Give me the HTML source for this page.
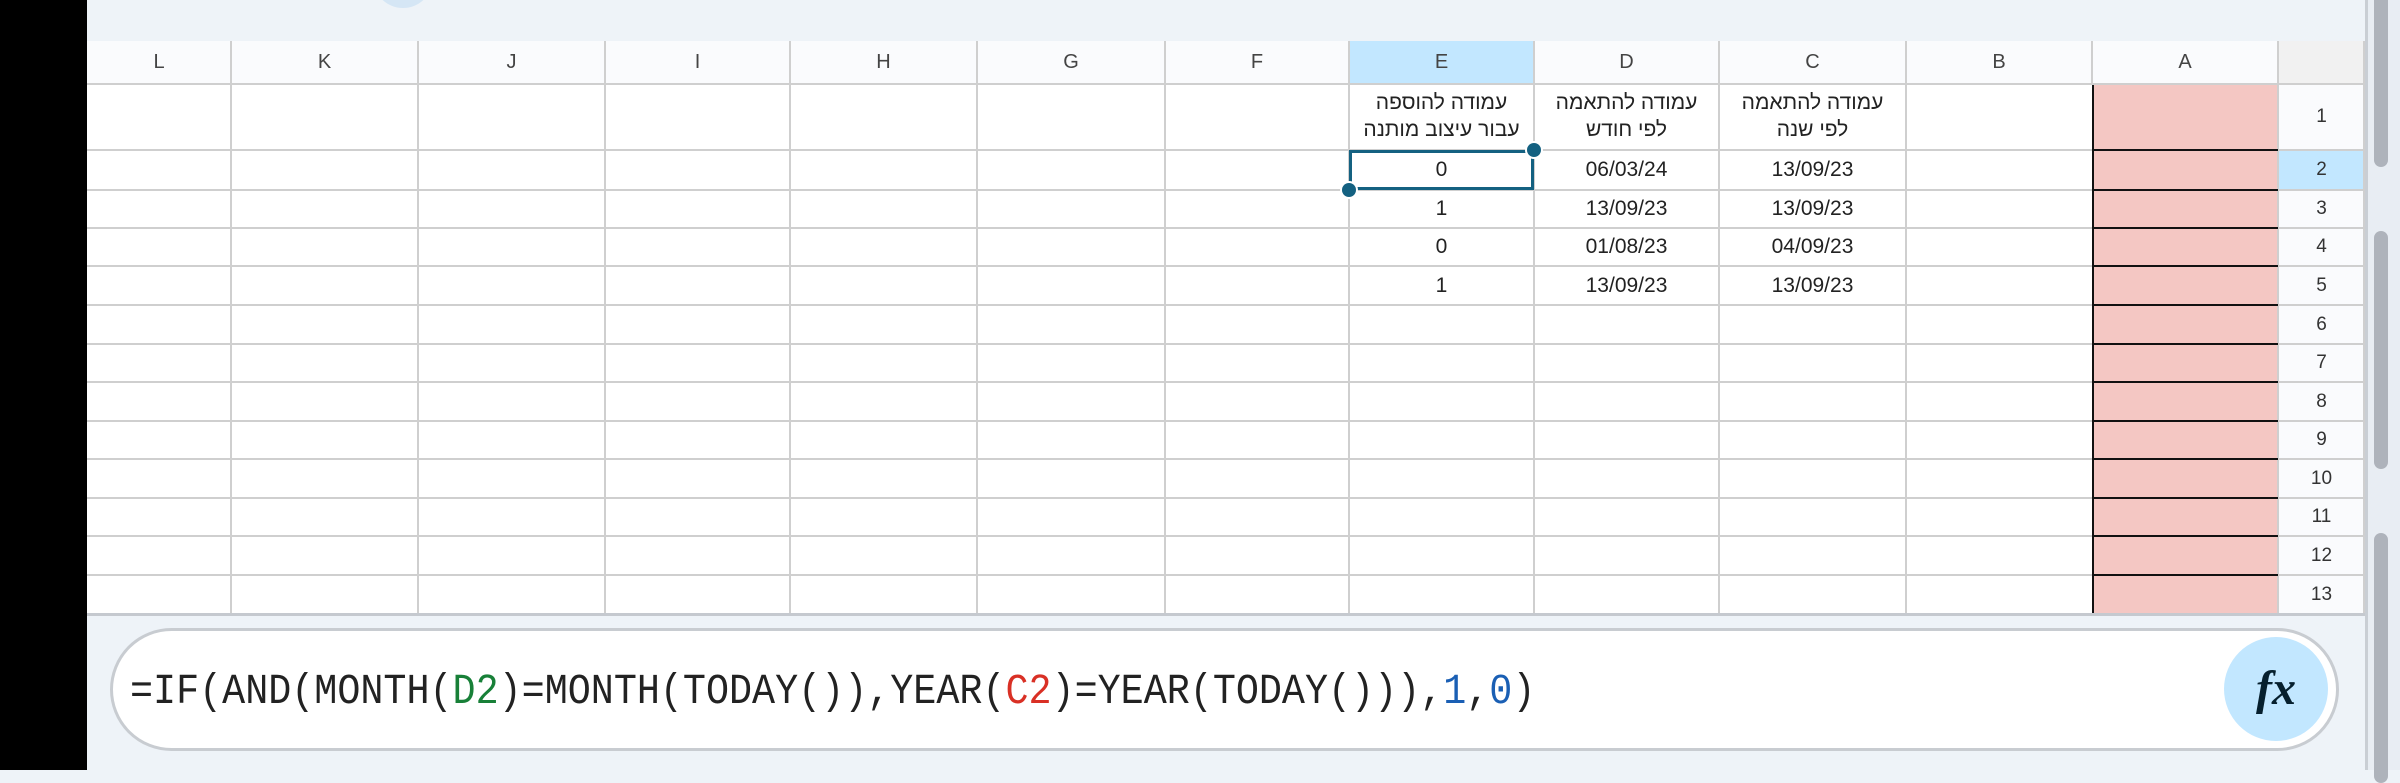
<!DOCTYPE html>
<html><head><meta charset="utf-8"><style>
*{margin:0;padding:0;box-sizing:border-box}
body{width:2400px;height:770px;overflow:hidden;background:#eef3f8;position:relative;font-family:"Liberation Sans",sans-serif}
.a{position:absolute}
.v{position:absolute;width:2px;background:#cfcfcf}
.h{position:absolute;height:2px;background:#cfcfcf}
.ch{position:absolute;top:41px;height:43px;line-height:43px;text-align:center;font-size:20px;color:#444}
.t{position:absolute;text-align:center;font-size:21px;color:#222}
.rn{position:absolute;left:2278px;width:87px;text-align:center;font-size:19px;color:#333}
</style></head><body>
<div class="a" style="left:0;top:0;width:87px;height:770px;background:#000"></div>
<div class="a" style="left:373px;top:-52px;width:60px;height:60px;border-radius:50%;background:#d5e6f5"></div>
<div class="a" style="left:87px;top:41px;width:2191px;height:43px;background:#fafbfd"></div>
<div class="a" style="left:1349px;top:41px;width:185px;height:43px;background:#c2e7ff"></div>
<div class="a" style="left:2278px;top:41px;width:87px;height:43px;background:#f1f1f1"></div>
<div class="a" style="left:87px;top:84px;width:2191px;height:530px;background:#fff"></div>
<div class="a" style="left:2278px;top:84px;width:87px;height:530px;background:#fafbfd"></div>
<div class="a" style="left:2278px;top:150px;width:87px;height:40px;background:#c2e7ff"></div>
<div class="a" style="left:2092px;top:84px;width:186px;height:530px;background:#f4c7c3;border-left:2px solid #111"></div>
<div class="v" style="left:230px;top:41px;height:573px"></div>
<div class="v" style="left:417px;top:41px;height:573px"></div>
<div class="v" style="left:604px;top:41px;height:573px"></div>
<div class="v" style="left:789px;top:41px;height:573px"></div>
<div class="v" style="left:976px;top:41px;height:573px"></div>
<div class="v" style="left:1164px;top:41px;height:573px"></div>
<div class="v" style="left:1348px;top:41px;height:573px"></div>
<div class="v" style="left:1533px;top:41px;height:573px"></div>
<div class="v" style="left:1718px;top:41px;height:573px"></div>
<div class="v" style="left:1905px;top:41px;height:573px"></div>
<div class="v" style="left:2091px;top:41px;height:43px"></div>
<div class="v" style="left:2277px;top:41px;height:573px"></div>
<div class="v" style="left:2363px;top:41px;height:573px"></div>
<div class="h" style="left:87px;top:83px;width:2278px"></div>
<div class="h" style="left:87px;top:149px;width:2005px"></div>
<div class="h" style="left:87px;top:189px;width:2005px"></div>
<div class="h" style="left:87px;top:227px;width:2005px"></div>
<div class="h" style="left:87px;top:265px;width:2005px"></div>
<div class="h" style="left:87px;top:304px;width:2005px"></div>
<div class="h" style="left:87px;top:343px;width:2005px"></div>
<div class="h" style="left:87px;top:381px;width:2005px"></div>
<div class="h" style="left:87px;top:420px;width:2005px"></div>
<div class="h" style="left:87px;top:458px;width:2005px"></div>
<div class="h" style="left:87px;top:497px;width:2005px"></div>
<div class="h" style="left:87px;top:535px;width:2005px"></div>
<div class="h" style="left:87px;top:574px;width:2005px"></div>
<div class="h" style="left:87px;top:613px;width:2278px;height:3px;background:#c5c9cf"></div>
<div class="h" style="left:2092px;top:149px;width:186px;background:#111"></div>
<div class="h" style="left:2092px;top:189px;width:186px;background:#111"></div>
<div class="h" style="left:2092px;top:227px;width:186px;background:#111"></div>
<div class="h" style="left:2092px;top:265px;width:186px;background:#111"></div>
<div class="h" style="left:2092px;top:304px;width:186px;background:#111"></div>
<div class="h" style="left:2092px;top:343px;width:186px;background:#111"></div>
<div class="h" style="left:2092px;top:381px;width:186px;background:#111"></div>
<div class="h" style="left:2092px;top:420px;width:186px;background:#111"></div>
<div class="h" style="left:2092px;top:458px;width:186px;background:#111"></div>
<div class="h" style="left:2092px;top:497px;width:186px;background:#111"></div>
<div class="h" style="left:2092px;top:535px;width:186px;background:#111"></div>
<div class="h" style="left:2092px;top:574px;width:186px;background:#111"></div>
<div class="h" style="left:2278px;top:149px;width:87px"></div>
<div class="h" style="left:2278px;top:189px;width:87px"></div>
<div class="h" style="left:2278px;top:227px;width:87px"></div>
<div class="h" style="left:2278px;top:265px;width:87px"></div>
<div class="h" style="left:2278px;top:304px;width:87px"></div>
<div class="h" style="left:2278px;top:343px;width:87px"></div>
<div class="h" style="left:2278px;top:381px;width:87px"></div>
<div class="h" style="left:2278px;top:420px;width:87px"></div>
<div class="h" style="left:2278px;top:458px;width:87px"></div>
<div class="h" style="left:2278px;top:497px;width:87px"></div>
<div class="h" style="left:2278px;top:535px;width:87px"></div>
<div class="h" style="left:2278px;top:574px;width:87px"></div>
<div class="ch" style="left:87px;width:144px">L</div>
<div class="ch" style="left:231px;width:187px">K</div>
<div class="ch" style="left:418px;width:187px">J</div>
<div class="ch" style="left:605px;width:185px">I</div>
<div class="ch" style="left:790px;width:187px">H</div>
<div class="ch" style="left:977px;width:188px">G</div>
<div class="ch" style="left:1165px;width:184px">F</div>
<div class="ch" style="left:1349px;width:185px">E</div>
<div class="ch" style="left:1534px;width:185px">D</div>
<div class="ch" style="left:1719px;width:187px">C</div>
<div class="ch" style="left:1906px;width:186px">B</div>
<div class="ch" style="left:2092px;width:186px">A</div>
<div class="t" dir="rtl" style="left:1349px;top:89px;width:185px;line-height:27px;font-size:21px">עמודה להוספה<br>עבור עיצוב מותנה</div>
<div class="t" dir="rtl" style="left:1534px;top:89px;width:185px;line-height:27px;font-size:21px">עמודה להתאמה<br>לפי חודש</div>
<div class="t" dir="rtl" style="left:1719px;top:89px;width:187px;line-height:27px;font-size:21px">עמודה להתאמה<br>לפי שנה</div>
<div class="t" style="left:1349px;top:150px;width:185px;line-height:40px">0</div>
<div class="t" style="left:1534px;top:150px;width:185px;line-height:40px">06/03/24</div>
<div class="t" style="left:1719px;top:150px;width:187px;line-height:40px">13/09/23</div>
<div class="t" style="left:1349px;top:190px;width:185px;line-height:38px">1</div>
<div class="t" style="left:1534px;top:190px;width:185px;line-height:38px">13/09/23</div>
<div class="t" style="left:1719px;top:190px;width:187px;line-height:38px">13/09/23</div>
<div class="t" style="left:1349px;top:228px;width:185px;line-height:38px">0</div>
<div class="t" style="left:1534px;top:228px;width:185px;line-height:38px">01/08/23</div>
<div class="t" style="left:1719px;top:228px;width:187px;line-height:38px">04/09/23</div>
<div class="t" style="left:1349px;top:266px;width:185px;line-height:39px">1</div>
<div class="t" style="left:1534px;top:266px;width:185px;line-height:39px">13/09/23</div>
<div class="t" style="left:1719px;top:266px;width:187px;line-height:39px">13/09/23</div>
<div class="a" style="left:1349px;top:150px;width:185px;height:40px;border:3px solid #146181"></div>
<div class="a" style="left:1527px;top:143px;width:14px;height:14px;border-radius:50%;background:#146181;box-shadow:0 0 0 2px #fff"></div>
<div class="a" style="left:1342px;top:183px;width:14px;height:14px;border-radius:50%;background:#146181;box-shadow:0 0 0 2px #fff"></div>
<div class="rn" style="top:84px;line-height:66px">1</div>
<div class="rn" style="top:150px;line-height:40px">2</div>
<div class="rn" style="top:190px;line-height:38px">3</div>
<div class="rn" style="top:228px;line-height:38px">4</div>
<div class="rn" style="top:266px;line-height:39px">5</div>
<div class="rn" style="top:305px;line-height:39px">6</div>
<div class="rn" style="top:344px;line-height:38px">7</div>
<div class="rn" style="top:382px;line-height:39px">8</div>
<div class="rn" style="top:421px;line-height:38px">9</div>
<div class="rn" style="top:459px;line-height:39px">10</div>
<div class="rn" style="top:498px;line-height:38px">11</div>
<div class="rn" style="top:536px;line-height:39px">12</div>
<div class="rn" style="top:575px;line-height:39px">13</div>
<div class="a" style="left:2365px;top:0;width:35px;height:770px;background:#e8edf3;border-left:3px solid #c9ced4"></div>
<div class="a" style="left:2374px;top:-10px;width:14px;height:177px;border-radius:7px;background:#aeb3bb"></div>
<div class="a" style="left:2374px;top:231px;width:14px;height:238px;border-radius:7px;background:#aeb3bb"></div>
<div class="a" style="left:2374px;top:533px;width:14px;height:250px;border-radius:7px;background:#aeb3bb"></div>
<div class="a" style="left:110px;top:628px;width:2229px;height:123px;border-radius:62px;background:#fff;border:3px solid #c8ccd1"></div>
<div class="a" style="left:130px;top:667px;font-family:'Liberation Mono',monospace;font-size:38.4px;line-height:50px;color:#222;white-space:pre;transform:scaleY(1.12);transform-origin:left center">=IF(AND(MONTH(<span style="color:#188038">D2</span>)=MONTH(TODAY()),YEAR(<span style="color:#d93025">C2</span>)=YEAR(TODAY())),<span style="color:#1a5fb4">1</span>,<span style="color:#1a5fb4">0</span>)</div>
<div class="a" style="left:2224px;top:637px;width:104px;height:104px;border-radius:50%;background:#c2e7ff"></div>
<div class="a" style="left:2224px;top:637px;width:104px;height:104px;line-height:104px;text-align:center;font-family:'Liberation Serif',serif;font-style:italic;font-weight:bold;font-size:48px;color:#06202e">fx</div>
</body></html>
